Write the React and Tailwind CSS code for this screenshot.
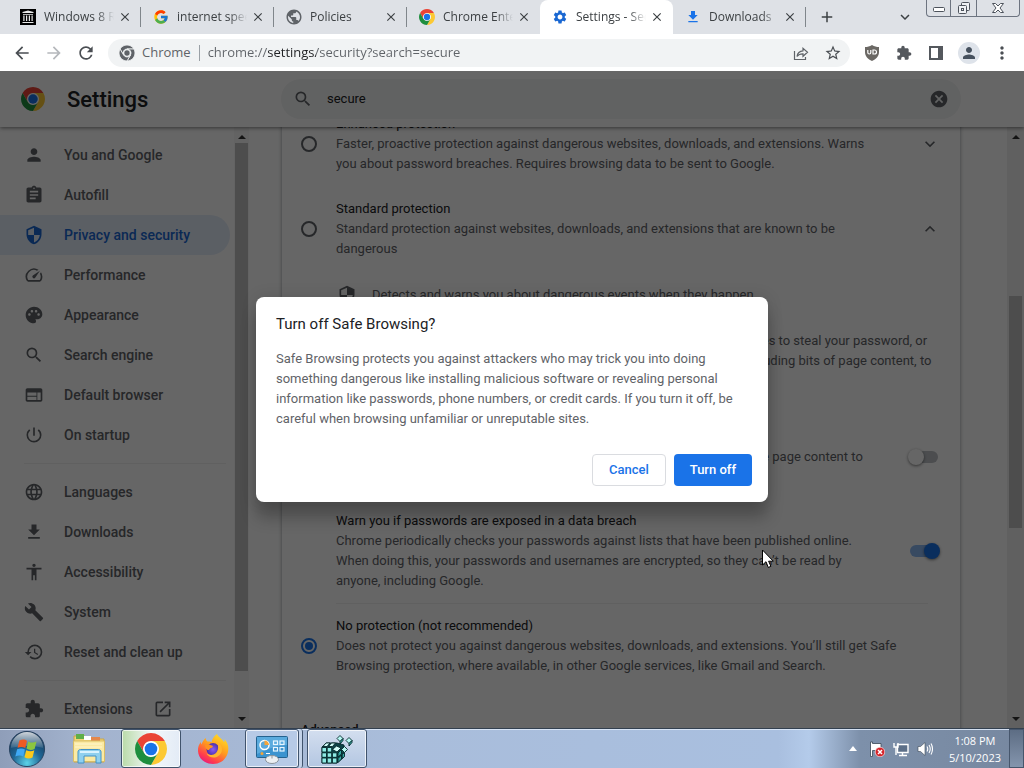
import React from "react";
import {
  MdPerson,
  MdAssignment,
  MdSecurity,
  MdOutlineSpeed,
  MdPalette,
  MdSearch,
  MdWeb,
  MdPowerSettingsNew,
  MdLanguage,
  MdAccessibility,
  MdBuild,
  MdHistory,
  MdOpenInNew,
  MdPublic,
  MdSettings,
  MdCancel,
  MdMoreVert,
  MdStarOutline,
  MdRefresh,
  MdArrowBack,
  MdArrowForward,
  MdKeyboardArrowDown,
  MdKeyboardArrowUp,
  MdClose,
  MdAdd,
} from "react-icons/md";
import { FcGoogle } from "react-icons/fc";

const uiFont = "font-['Open_Sans','Noto_Sans',sans-serif]";

function ChromeLogo({ className, mono }) {
  const red = mono ? "#5f6368" : "#ea4335";
  const yellow = mono ? "#5f6368" : "#fcc934";
  const green = mono ? "#5f6368" : "#1e8e3e";
  const blue = mono ? "#5f6368" : "#1a73e8";
  const edge = mono ? { stroke: "#f1f3f4", strokeWidth: 2.5 } : {};
  return (
    <svg viewBox="0 0 48 48" className={className} aria-hidden="true">
      <circle cx="24" cy="24" r="12" fill={mono ? "#f1f3f4" : "#fff"} />
      <path {...edge} fill={red} d="M24 12H44.78a24 24 0 0 0-41.56 0L13.61 30A12 12 0 0 1 24 12Z" />
      <path {...edge} fill={yellow} d="M34.39 30 24 48A24 24 0 0 0 44.78 12H24A12 12 0 0 1 34.39 30Z" />
      <path {...edge} fill={green} d="M13.61 30 3.22 12A24 24 0 0 0 24 48L34.39 30a12 12 0 0 1-20.78 0Z" />
      <circle cx="24" cy="24" r={mono ? 8 : 9.5} fill={blue} />
    </svg>
  );
}

function DownloadGlyph({ className }) {
  return (
    <svg viewBox="0 0 24 24" className={className} fill="currentColor" aria-hidden="true">
      <path d="M19 9h-4V3H9v6H5l7 7 7-7zM5 18v2h14v-2H5z" />
    </svg>
  );
}

function PuzzleGlyph({ className }) {
  return (
    <svg viewBox="0 0 24 24" className={className} fill="currentColor" aria-hidden="true">
      <path d="M20.5 11H19V7c0-1.100-.9-2-2-2h-4V3.500C13 2.120 11.880 1 10.500 1S8 2.120 8 3.500V5H4c-1.100 0-1.990.9-1.990 2v3.800H3.500c1.490 0 2.700 1.210 2.700 2.700s-1.210 2.700-2.700 2.700H2V20c0 1.100.9 2 2 2h3.800v-1.500c0-1.490 1.210-2.700 2.700-2.700s2.700 1.210 2.700 2.700V22H17c1.100 0 2-.9 2-2v-4h1.500c1.380 0 2.500-1.120 2.500-2.500S21.880 11 20.500 11z" />
    </svg>
  );
}

function ArchiveLogo({ className }) {
  return (
    <svg viewBox="0 0 16 16" className={className} aria-hidden="true">
      <rect width="16" height="16" fill="#000" />
      <path
        fill="#e8e8e8"
        d="M8 1.500 13.500 3v1h-11V3zM3 5h10v.8H3zM3.300 6.500h1.200V12H3.300zM6 6.500h1.200V12H6zM8.800 6.500H10V12H8.800zM11.500 6.500h1.200V12h-1.200zM2.500 13h11v1h-11z"
      />
    </svg>
  );
}

const tabs = [
  { title: "Windows 8 RTM", icon: <ArchiveLogo className="size-4" /> },
  { title: "internet speed test", icon: <FcGoogle className="size-4" /> },
  { title: "Policies", icon: <MdPublic className="size-[18px] -m-px text-[#5f6368]" /> },
  { title: "Chrome Enterprise", icon: <ChromeLogo className="size-4" /> },
  { title: "Settings - Security", icon: <MdSettings className="size-4 text-[#1967d2]" />, active: true },
  { title: "Downloads", icon: <DownloadGlyph className="size-4 text-[#1a73e8]" /> },
];

function Tab({ tab, ruled }) {
  return (
    <div
      className={`flex h-full w-[133px] shrink items-center pl-3 ${
        tab.active ? "rounded-t-lg bg-white" : ""
      }`}
    >
      <button
        role="tab"
        aria-selected={!!tab.active}
        className="flex min-w-0 flex-1 items-center gap-2 overflow-hidden text-left"
      >
        <span className="shrink-0">{tab.icon}</span>
        <span className="w-[70px] overflow-hidden whitespace-nowrap text-[12px] text-[#3c4043] [mask-image:linear-gradient(to_right,black_75%,transparent)]">
          {tab.title}
        </span>
      </button>
      <button aria-label={`Close ${tab.title}`} className="mr-2 shrink-0">
        <MdClose className="size-[14px] text-[#3c4043] [stroke:currentColor]" />
      </button>
      <span className={`h-5 w-px shrink-0 ${ruled ? "bg-[#80868b]" : ""}`} />
    </div>
  );
}

function TabStrip() {
  return (
    <div className="flex h-[34px] shrink-0 items-center bg-[#dee1e6] pl-2">
      <div role="tablist" className="flex h-full min-w-0">
        {tabs.map((tab, i) => (
          <Tab key={tab.title} tab={tab} ruled={i !== 3 && i !== 4} />
        ))}
      </div>
      <button aria-label="New tab" className="ml-3">
        <MdAdd className="size-[18px] text-[#3c4043] [stroke:currentColor]" />
      </button>
      <button aria-label="Search tabs" className="mr-3 ml-auto">
        <MdKeyboardArrowDown className="size-[18px] text-[#3c4043] [stroke:currentColor]" />
      </button>
      <div className="mr-1 flex h-[17px] self-start rounded-b border border-t-0 border-[#6d7480]">
        <button aria-label="Minimize" className="flex w-6 items-center justify-center border-r border-[#6d7480]">
          <svg viewBox="0 0 14 12" className="h-3 w-[14px]" fill="#fff" stroke="#4d535c">
            <rect x="1.5" y="5.5" width="11" height="4" rx="1" />
          </svg>
        </button>
        <button aria-label="Restore" className="flex w-[26px] items-center justify-center border-r border-[#6d7480]">
          <svg viewBox="0 0 14 14" className="size-[14px]" fill="#eef0f3" stroke="#4d535c">
            <rect x="4.5" y="1.5" width="8" height="8" rx="1" />
            <rect x="1.5" y="4.5" width="8" height="8" rx="1" />
            <rect x="4.5" y="7.5" width="2" height="2" />
          </svg>
        </button>
        <button aria-label="Close window" className="flex w-[42px] items-center justify-center">
          <svg viewBox="0 0 14 12" className="h-3 w-[14px]" fill="#fff" stroke="#4d535c">
            <path d="M1.500 1.500h3L7 4l2.500-2.500h3L9 6l3.500 4.500h-3L7 8l-2.500 2.500h-3L5 6z" />
          </svg>
        </button>
      </div>
    </div>
  );
}

function Toolbar() {
  return (
    <div className="flex h-[37px] shrink-0 items-center bg-white pr-3 pl-3">
      <div className="flex shrink-0 items-center gap-3">
        <button aria-label="Back">
          <MdArrowBack className="size-5 text-[#4a4e53]" />
        </button>
        <button aria-label="Forward">
          <MdArrowForward className="size-5 text-[#b5b8bc]" />
        </button>
        <button aria-label="Reload">
          <MdRefresh className="size-5 text-[#4a4e53]" />
        </button>
      </div>
      <div className="ml-3 flex h-7 min-w-0 flex-1 items-center rounded-full bg-[#f1f3f4] pr-2 pl-[11px] text-[13px]">
        <ChromeLogo className="size-4 shrink-0" mono />
        <label htmlFor="address" className="ml-[7px] text-[#5f6368]">
          Chrome
        </label>
        <span className="mx-2 h-4 w-px bg-[#9aa0a6]" />
        <input
          id="address"
          type="text"
          defaultValue="chrome://settings/security?search=secure"
          className="min-w-0 flex-1 bg-[linear-gradient(to_right,#5f6368_60px,#202124_60px,#202124_108px,#5f6368_108px)] bg-clip-text text-transparent outline-none"
        />
        <button aria-label="Share this page" className="mr-[14px]">
          <svg viewBox="0 0 18 18" className="size-[18px]" fill="none" stroke="#5f6368" strokeWidth="1.200">
            <path d="M2.500 7v8.500h11v-2.500" />
            <path d="M5 12.500c.5-3.500 2.500-5.500 6-5.700V4.300l4.500 4-4.500 4V9.800C8.500 9.700 6.500 10.500 5 12.500z" />
          </svg>
        </button>
        <button aria-label="Bookmark this page">
          <MdStarOutline className="size-[18px] text-[#4a4e53]" />
        </button>
      </div>
      <div className="ml-3 flex shrink-0 items-center gap-3">
        <button aria-label="uBlock Origin" className="flex size-5 items-center justify-center">
          <svg viewBox="0 0 16 16" className="size-4">
            <path fill="#6b6864" d="M8 0c2.500 1.500 4.500 2 7 2v5c0 4.500-3 7-7 9-4-2-7-4.500-7-9V2c2.500 0 4.500-.5 7-2z" />
            <path
              fill="none"
              stroke="#fff"
              strokeWidth="1.200"
              d="M3.800 5v2.500a1.500 1.500 0 0 0 3 0V5M9 5v4h1.500a2 2 0 0 0 0-4z"
            />
          </svg>
        </button>
        <button aria-label="Extensions" className="flex size-5 items-center justify-center">
          <PuzzleGlyph className="size-4 text-[#54585d]" />
        </button>
        <button aria-label="Side panel" className="flex size-5 items-center justify-center">
          <svg viewBox="0 0 14 14" className="size-[14px]">
            <path fill="#54585d" d="M0 0h14v14H0zM2 2v10h7V2z" fillRule="evenodd" />
          </svg>
        </button>
        <button aria-label="Profile" className="flex size-[22px] items-center justify-center rounded-full bg-[#dee3ea]">
          <MdPerson className="size-[18px] text-[#46515e]" />
        </button>
        <button aria-label="Menu">
          <MdMoreVert className="size-5 text-[#4a4e53]" />
        </button>
      </div>
    </div>
  );
}

function SettingsHeader() {
  return (
    <header className="relative z-10 flex h-14 shrink-0 items-center bg-white pr-[63px] shadow-[0_1px_4px_rgba(0,0,0,0.5)]">
      <div className="flex w-[281px] shrink-0 items-center gap-[22px] pl-[21px]">
        <ChromeLogo className="size-6" />
        <h1 className="text-[22px] font-medium text-[#202124]">Settings</h1>
      </div>
      <label className="flex h-10 max-w-[680px] min-w-0 flex-1 items-center rounded-full bg-[#f3f4f4] px-3 text-[13px] text-[#202124]">
        <MdSearch className="size-5 shrink-0 text-[#5f6368]" />
        <input
          type="text"
          aria-label="Search settings"
          defaultValue="secure"
          className="ml-[14px] min-w-0 flex-1 bg-transparent outline-none"
        />
        <button aria-label="Clear search">
          <MdCancel className="size-5 text-[#5f6368]" />
        </button>
      </label>
    </header>
  );
}

const navGroups = [
  [
    ["You and Google", MdPerson],
    ["Autofill", MdAssignment],
    ["Privacy and security", MdSecurity],
    ["Performance", MdOutlineSpeed],
    ["Appearance", MdPalette],
    ["Search engine", MdSearch],
    ["Default browser", MdWeb],
    ["On startup", MdPowerSettingsNew],
  ],
  [
    ["Languages", MdLanguage],
    ["Downloads", DownloadGlyph],
    ["Accessibility", MdAccessibility],
    ["System", MdBuild],
    ["Reset and clean up", MdHistory],
  ],
  [["Extensions", PuzzleGlyph]],
];

function ScrollArrow({ up }) {
  return (
    <svg viewBox="0 0 8 4" className="h-1 w-2 shrink-0" fill="#333">
      <path d={up ? "M0 4 4 0l4 4z" : "M0 0h8L4 4z"} />
    </svg>
  );
}

function Sidebar() {
  return (
    <div className="flex w-[249px] shrink-0 overflow-hidden">
      <nav className="min-w-0 flex-1 pt-2">
        {navGroups.map((group, g) => (
          <div key={g}>
            {g > 0 && <hr className="my-2 mr-2 ml-6 border-[#f1f1f1]" />}
            {group.map(([label, Icon]) => {
              const active = label === "Privacy and security";
              return (
                <a
                  key={label}
                  href={`#${label.toLowerCase().replaceAll(" ", "-")}`}
                  className={`mr-1 flex h-10 items-center gap-5 rounded-r-full pl-6 text-[14px] font-medium ${
                    active ? "bg-[#e4edfb] text-[#1967d2]" : "text-[#5f6368]"
                  }`}
                >
                  <Icon className="size-5 shrink-0" />
                  <span>{label}</span>
                  {label === "Extensions" && <MdOpenInNew className="size-5" />}
                </a>
              );
            })}
          </div>
        ))}
      </nav>
      <div className="flex w-[15px] flex-col items-center bg-[#f8f8f8] pt-2 pb-[7px]">
        <ScrollArrow up />
        <div className="mt-1 mb-[46px] w-[13px] flex-1 bg-[#c1c1c1]" />
        <ScrollArrow />
      </div>
    </div>
  );
}

function Option({ id, title, checked, chevron, children }) {
  const Chevron = chevron === "up" ? MdKeyboardArrowUp : MdKeyboardArrowDown;
  return (
    <div className="flex">
      <input
        type="radio"
        name="protection"
        id={id}
        defaultChecked={checked}
        className="mt-[22px] size-4 shrink-0 appearance-none rounded-full border-2 border-[#5f6368] checked:border-[#1a73e8] checked:bg-[#1a73e8] checked:bg-clip-content checked:p-[2px]"
      />
      <label htmlFor={id} className="ml-[19px] max-w-[564px] flex-1">
        <span className="block text-[#202124]">{title}</span>
        <span className="block text-[#5f6368]">{children}</span>
      </label>
      {chevron && (
        <button aria-label={`Details of ${title}`} className="mt-5 mr-5 ml-auto size-5 self-start">
          <Chevron className="size-5 text-[#5f6368]" />
        </button>
      )}
    </div>
  );
}

function ToggleRow({ id, title, checked, children }) {
  return (
    <div className="flex items-center pl-[35px]">
      <label htmlFor={id} className="max-w-[530px] flex-1">
        <span className="block text-[#202124]">{title}</span>
        <span className="block text-[#5f6368]">{children}</span>
      </label>
      <input
        id={id}
        type="checkbox"
        role="switch"
        defaultChecked={checked}
        className="relative mr-[22px] ml-auto h-3 w-[28px] shrink-0 appearance-none rounded-full bg-[#bdc1c6] before:absolute before:-top-[2px] before:-left-[2px] before:size-4 before:rounded-full before:bg-white before:shadow-[0_1px_3px_rgba(0,0,0,0.5)] checked:bg-[#8cb8f3] checked:before:left-[14px] checked:before:bg-[#1a73e8]"
      />
    </div>
  );
}

function SecurityCard() {
  return (
    <main className="flex min-w-0 flex-1 overflow-hidden">
      <div className="min-w-0 flex-1 pr-[46px] pl-8">
        <div className="max-w-[681px] border-x border-[#d5d7da] pl-[19px] text-[13px] leading-5 shadow-[0_1px_3px_rgba(60,64,67,0.3)]">
          <div className="-mt-[13px] flex flex-col pb-[45px]">
            <Option id="enhanced" title="Enhanced protection" chevron="down">
              Faster, proactive protection against dangerous websites, downloads, and extensions. Warns
              <br /> you about password breaches. Requires browsing data to be sent to Google.
            </Option>
            <div className="mt-[25px]">
              <Option id="standard" title="Standard protection" chevron="up">
                Standard protection against websites, downloads, and extensions that are known to be
                <br /> dangerous
              </Option>
            </div>
            <ul className="mt-[26px] flex flex-col gap-[26px] pr-6 pl-9 text-[#5f6368]">
              <li className="flex gap-[15px]">
                <MdSecurity className="size-5 shrink-0" />
                <span>Detects and warns you about dangerous events when they happen</span>
              </li>
              <li className="flex gap-[15px]">
                <MdSearch className="size-5 shrink-0" />
                <span>
                  Checks URLs with a list of unsafe sites stored in Chrome. If a site tries to steal your password, or
                  <br />
                  when you download a harmful file, Chrome may also send URLs, including bits of page content, to
                  <br />
                  Safe Browsing
                </span>
              </li>
            </ul>
            <div className="mt-9">
              <ToggleRow id="improve" title="Help improve security on the web for everyone">
                Sends URLs of some pages you visit, limited system information, and some page content to
                <br /> Google, to help discover new threats and protect everyone on the web
              </ToggleRow>
            </div>
            <div className="mt-6">
              <ToggleRow id="breach" title="Warn you if passwords are exposed in a data breach" checked>
                Chrome periodically checks your passwords against lists that have been published online.
                <br /> When doing this, your passwords and usernames are encrypted, so they can’t be read by
                <br /> anyone, including Google.
              </ToggleRow>
            </div>
            <hr className="my-3 mr-8 ml-[35px] border-[#f1f1f1]" />
            <Option id="none" title="No protection (not recommended)" checked>
              Does not protect you against dangerous websites, downloads, and extensions. You’ll still get Safe
              <br /> Browsing protection, where available, in other Google services, like Gmail and Search.
            </Option>
            <h2 className="mt-11 font-medium text-[#202124]">Advanced</h2>
          </div>
        </div>
      </div>
      <div className="flex w-[17px] flex-col items-center bg-[#f1f1f1] pt-2 pb-[7px]">
        <ScrollArrow up />
        <div className="min-h-0 flex-[39]" />
        <div className="min-h-0 w-[13px] flex-[58] bg-[#c1c1c1]" />
        <div className="min-h-0 flex-[47]" />
        <ScrollArrow />
      </div>
    </main>
  );
}

function ConfirmDialog() {
  return (
    <div className="absolute inset-0 z-20 flex items-center justify-center bg-black/60">
      <section
        role="dialog"
        aria-modal="true"
        aria-labelledby="dialog-title"
        className="w-lg rounded-lg bg-white px-4 pt-[17px] pb-4 shadow-[0_0_16px_rgba(0,0,0,0.12),0_16px_16px_rgba(0,0,0,0.24)]"
      >
        <h2 id="dialog-title" className="px-1 text-[15px] leading-5 text-[#202124]">
          Turn off Safe Browsing?
        </h2>
        <p className="mt-[15px] px-1 text-[13px] leading-5 text-[#5f6368]">
          Safe Browsing protects you against attackers who may trick you into doing
          <br /> something dangerous like installing malicious software or revealing personal
          <br /> information like passwords, phone numbers, or credit cards. If you turn it off, be
          <br /> careful when browsing unfamiliar or unreputable sites.
        </p>
        <div className="mt-[25px] flex justify-end gap-2 text-[13px] font-medium">
          <button className="h-8 rounded border border-[#dadce0] px-4 text-[#1a73e8]">Cancel</button>
          <button className="h-8 rounded bg-[#1a73e8] px-4 text-white">Turn off</button>
        </div>
      </section>
    </div>
  );
}

function StartOrb() {
  return (
    <svg viewBox="0 0 40 40" className="size-[38px]" aria-hidden="true">
      <defs>
        <radialGradient id="orb" cx="0.5" cy="0.9" r="0.9">
          <stop offset="0" stopColor="#5cd3e8" />
          <stop offset="0.45" stopColor="#1f6796" />
          <stop offset="1" stopColor="#14304f" />
        </radialGradient>
        <linearGradient id="gloss" x1="0" y1="0" x2="0" y2="1">
          <stop offset="0" stopColor="#fff" stopOpacity="0.8" />
          <stop offset="1" stopColor="#fff" stopOpacity="0.100" />
        </linearGradient>
      </defs>
      <circle cx="20" cy="20" r="18.500" fill="url(#orb)" stroke="#27415f" />
      <path d="M3 19a17 17 0 0 1 34 0c-8-3-24-3-34 0z" fill="url(#gloss)" />
      <path fill="#ee5a24" d="M12 11c3-1.500 6-1.500 8 .5L18.200 19c-2.700-1.700-5.500-1.500-8.200-.2z" />
      <path fill="#8cc63f" d="M21.300 12c3 1.800 6 1.500 8.700.2L28 20c-3 1.300-5.800 1.300-8.500-.4z" />
      <path fill="#3fa9f5" d="M9.600 20.300c3-1.300 5.700-1.300 8.200.2L16 28c-2.500-1.500-5.500-1.300-8.300 0z" />
      <path fill="#fbc91b" d="M19.200 21.200c3 1.500 5.800 1.500 8.500.2L25.800 29c-2.800 1.500-5.700 1.300-8.500-.3z" />
    </svg>
  );
}

function ExplorerIcon() {
  return (
    <svg viewBox="0 0 34 32" className="h-8 w-[34px]" aria-hidden="true">
      <path d="M2 3h11l2 3h17v23H2z" fill="#f2d574" stroke="#c9a648" />
      <path d="M4 1h8v5H4z" fill="#5fae48" />
      <path d="M12 3h7v4h-7z" fill="#fff" />
      <path d="M19 4h9v4h-9z" fill="#e4874b" />
      <path d="M1.500 8h31v20.500h-31z" fill="#fbeaa4" stroke="#d9bd65" />
      <path d="M3 11h27M3 14h27" stroke="#fff6cf" />
      <path d="M6 30V19c0-1.500 1-2.500 2.500-2.500h18c1.500 0 2.500 1 2.500 2.500v11h-5v-7H12v7z" fill="#8fd0ef" stroke="#4292c6" />
      <path d="M8 19h19" stroke="#d9f3ff" strokeWidth="2" />
    </svg>
  );
}

function FirefoxIcon() {
  return (
    <svg viewBox="0 0 32 32" className="size-8" aria-hidden="true">
      <defs>
        <linearGradient id="flame" x1="0.8" y1="0" x2="0.2" y2="1">
          <stop offset="0" stopColor="#ffe226" />
          <stop offset="0.45" stopColor="#ff9a1f" />
          <stop offset="0.8" stopColor="#ff3a4f" />
          <stop offset="1" stopColor="#e31587" />
        </linearGradient>
        <radialGradient id="globe">
          <stop offset="0" stopColor="#8b5cf6" />
          <stop offset="1" stopColor="#4b2fa8" />
        </radialGradient>
      </defs>
      <path
        fill="url(#flame)"
        d="M20 1c1 3 5 4.500 7 8 1-.5.5-2 .2-3C31 10 32 14 31 19c-1.500 7-7 12-15 12C7.500 31 1.500 25.500 1 18c-.2-4 1-7 3-9 0 1 0 2 .3 2.500C5.500 9 6.500 6.500 9 5c-.3 1.500.5 3 1.500 3.500 1.500 0 3 0 4 .8C15 6 17 3 20 1z"
      />
      <circle cx="16" cy="16.500" r="6.500" fill="url(#globe)" />
      <path fill="#ff9220" d="M8 12c3-1 5 0 7 .5 1.500.5 1 2-1 2.500-1 .3-1.500 1-2 2-2 .5-3.500-1-4-5z" />
      <path fill="#ffb52e" d="M20 9c4 2 6 6 4.500 10-1.300 3.500-4.500 5.500-8 5.500-3 0-5.500-1.500-7-4 3 2 7 2 9.500-.5 2.800-3 2.500-7 1-11z" />
    </svg>
  );
}

function ControlPanelIcon() {
  return (
    <svg viewBox="0 0 34 30" className="h-[30px] w-[34px]" aria-hidden="true">
      <rect x="1.500" y="2.500" width="31" height="21" rx="1" fill="#3b93cf" stroke="#24628f" />
      <path d="M2 3h30v8C22 11 12 15 2 20z" fill="#6fbbe8" opacity="0.6" />
      <circle cx="9.500" cy="11" r="4.500" fill="#5aa9db" stroke="#fff" strokeWidth="1.500" />
      <path d="M9.500 11V6.500a4.500 4.500 0 0 1 4.500 4.500z" fill="#f2a43a" />
      <circle cx="7" cy="19.500" r="1.500" fill="#f2a43a" />
      <path d="M11 19.500h4" stroke="#fff" />
      <g fill="none" stroke="#e6f6ff" strokeWidth="1.200">
        <rect x="18.500" y="7" width="4" height="3.500" />
        <rect x="25" y="7" width="4" height="3.500" />
        <rect x="18.500" y="13.500" width="4" height="3.500" />
        <rect x="25" y="13.500" width="4" height="3.500" />
      </g>
      <ellipse cx="17" cy="25.500" rx="6.500" ry="4" fill="#eceff2" stroke="#8c949c" />
      <path d="M17 21.500v3" stroke="#8c949c" />
    </svg>
  );
}

function RegistryIcon() {
  return (
    <svg viewBox="0 0 34 34" className="size-[34px]" stroke="#06282b" strokeWidth="0.900" aria-hidden="true">
      <path d="m2 15 4-4h11l7 2v12l-7 6H2z" fill="#0d4347" />
      <path
        fill="#8eebe4"
        d="M2 15.500h4.500v4.500H2zM7.200 15.500h4.500v4.500H7.200zM2 20.800h4.500v4.500H2zM7.200 20.800h4.500v4.500H7.200zM12.400 20.800h4.500v4.500h-4.500zM2 26h4.500v5H2zM7.200 26h4.500v5H7.200zM12.400 26h4.500v5h-4.500z"
      />
      <path fill="#d5fffa" d="m3 14.500 3-3.500h4l-3 3.500zM8.500 14.500l3-3.500h4l-3 3.500zM12.500 17.500l4-3.500 4.500 2-4 4z" />
      <path fill="#38a8a2" d="m18 21 3.500-3.500V22L18 25zM18 26.500l3.500-3.500v4L18 30.500zM22.200 17l2.300-2v4.500l-2.300 2zM22.200 22.500l2.300-2v4l-2.300 2z" />
      <path fill="#b5f7f1" d="m20 3.500 3 3-3 3-3-3zM29 5.500l3 3-3 3-3-3zM24.500 14.500l3 3-3 3-3-3z" />
      <path fill="#38a8a2" d="m20 9.500 3-3v2l-3 3.500zM29 11.500l3-3v2L29 14z" />
    </svg>
  );
}

const taskButton =
  "flex items-center justify-center rounded-[3px] border border-[#40536c] shadow-[inset_0_0_0_1px_rgba(255,255,255,0.7)]";

function Taskbar() {
  return (
    <footer className="flex h-10 shrink-0 items-center border-t border-[#33404f] bg-[linear-gradient(to_right,#8f9eb9_0,#a3b3ce_8%,#a9bddb_40%,#a9bfdf_76%,#b4cbea_79%,#7d90aa_84%,#7788a0_100%)] shadow-[inset_0_1px_0_rgba(220,232,248,0.9)]">
      <button aria-label="Start" className="ml-2 shrink-0">
        <StartOrb />
      </button>
      <button aria-label="File Explorer" className="ml-[26px] shrink-0">
        <ExplorerIcon />
      </button>
      <button
        aria-label="Google Chrome"
        className={`${taskButton} ml-[15px] h-[39px] w-[60px] bg-[linear-gradient(to_right,#b9dba8,#f2f7fa_50%,#e3ebf6)]`}
      >
        <ChromeLogo className="size-8" />
      </button>
      <button aria-label="Firefox" className="ml-4 shrink-0">
        <FirefoxIcon />
      </button>
      <button aria-label="Control Panel" className={`${taskButton} ml-4 h-[39px] w-[54px] bg-[#b7cae6]`}>
        <ControlPanelIcon />
      </button>
      <span className="h-[39px] w-1 rounded-r-[3px] border-r border-[#40536c] bg-[#c3d2e8]" />
      <button
        aria-label="Registry Editor"
        className={`${taskButton} ml-1 h-[39px] w-[60px] bg-[linear-gradient(to_bottom,#d3deef,#b4c7e2)]`}
      >
        <RegistryIcon />
      </button>
      <div className="ml-auto flex h-full items-center">
        <button aria-label="Show hidden icons">
          <svg viewBox="0 0 8 5" className="h-[5px] w-2" fill="#fff">
            <path d="m0 5 4-5 4 5z" />
          </svg>
        </button>
        <button aria-label="Action Center" className="ml-3">
          <svg viewBox="0 0 16 16" className="size-4">
            <path d="M1.500 1v14.500h2V9.500H12v-7H3.500V1z" fill="#fff" stroke="#3a4656" strokeWidth="0.800" />
            <circle cx="11" cy="11" r="4.800" fill="#d6252b" stroke="#fff" strokeWidth="0.600" />
            <path d="m9 9 4 4m0-4-4 4" stroke="#fff" strokeWidth="1.500" />
          </svg>
        </button>
        <button aria-label="Network" className="ml-2">
          <svg viewBox="0 0 16 16" className="size-4">
            <path d="M4.500 3.500h10.500v8h-10.500z" fill="#5c6f88" stroke="#fff" strokeWidth="1.400" />
            <path d="M6 14.500h8M9.500 11.500v3" stroke="#fff" strokeWidth="1.400" />
            <path d="M1 2v4h4V2M3 6v8" fill="none" stroke="#fff" strokeWidth="1.400" />
          </svg>
        </button>
        <button aria-label="Volume" className="ml-2">
          <svg viewBox="0 0 16 16" className="size-4">
            <path d="M1 5.500h2.500L8 1.500v13l-4.500-4H1z" fill="#fff" stroke="#3a4656" strokeWidth="0.600" />
            <path
              d="M10 5.500q1.500 2.500 0 5M12 4q2.500 4 0 8M14 2.500q3 5.500 0 11"
              fill="none"
              stroke="#fff"
              strokeWidth="1.100"
            />
          </svg>
        </button>
        <div className="ml-4 text-center text-[11px] leading-[17px] text-white">
          <div>1:08 PM</div>
          <div>5/10/2023</div>
        </div>
        <button
          aria-label="Show desktop"
          className="ml-2 h-full w-[15px] border border-[#46566c] bg-[linear-gradient(to_bottom,#5d6d84,#8495ad)]"
        />
      </div>
    </footer>
  );
}

export default function App() {
  return (
    <div className={`relative flex h-screen flex-col overflow-hidden ${uiFont}`}>
      <TabStrip />
      <Toolbar />
      <div className="relative flex min-h-0 flex-1 flex-col overflow-hidden bg-white font-[Roboto,sans-serif]">
        <SettingsHeader />
        <div className="flex min-h-0 flex-1">
          <Sidebar />
          <SecurityCard />
        </div>
        <ConfirmDialog />
      </div>
      <Taskbar />
      <svg
        viewBox="0 0 12 20"
        className="pointer-events-none absolute top-[549px] left-[762px] z-30 h-5 w-3"
        aria-hidden="true"
      >
        <path d="M.5 1v15l3.500-3.300L6.300 18.500l2.600-1.200-2.300-5.100h4.700z" fill="#fff" stroke="#000" />
      </svg>
    </div>
  );
}
